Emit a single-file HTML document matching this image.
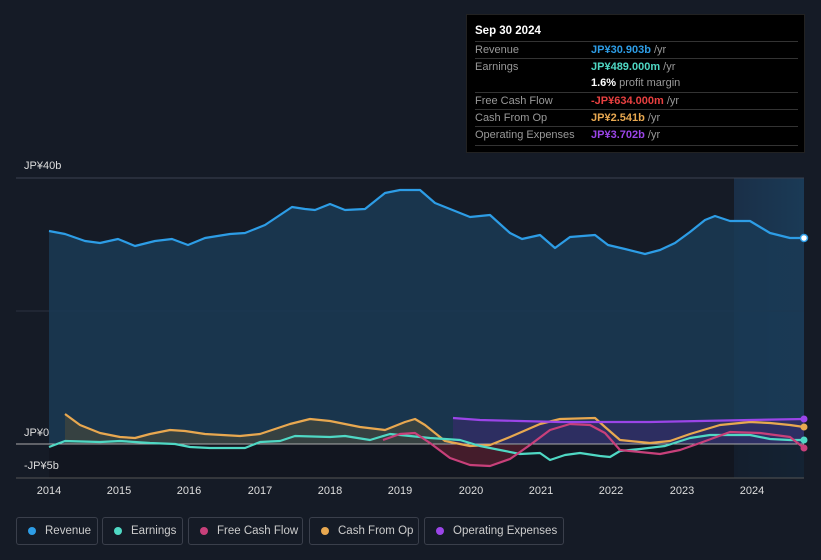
<!DOCTYPE html>
<html><head><meta charset="utf-8"><style>
body{margin:0;width:821px;height:560px;background:#151b26;font-family:"Liberation Sans",sans-serif;overflow:hidden;position:relative}
.tt{position:absolute;left:466px;top:14px;width:339px;height:139px;background:#000;border:1px solid #222;box-sizing:border-box;font-size:11px;color:#999}
.tt .h{color:#fff;font-size:11.5px;font-weight:bold;position:absolute;left:8px;top:10px}
.row{position:absolute;left:8px;right:6px;height:17px;border-top:1px solid #333;line-height:17px}
.row span.v{position:absolute;left:116px}
.row b{font-weight:bold}
.leg{position:absolute;top:517px;height:28px;border:1px solid #3a3f4b;border-radius:3px;box-sizing:border-box;color:#ccc;font-size:11.5px;line-height:26px;padding-left:28px}
.leg i{position:absolute;left:11px;top:9px;width:8px;height:8px;border-radius:50%}
.yl{position:absolute;color:#ddd;font-size:11px}
.xl{position:absolute;top:485px;color:#ddd;font-size:11px;width:40px;text-align:center}
</style></head><body>
<svg width="821" height="560" style="position:absolute;left:0;top:0">
<defs><linearGradient id="fc" x1="0" y1="0" x2="1" y2="0"><stop offset="0" stop-color="#1b3450"/><stop offset="1" stop-color="#1c4262"/></linearGradient></defs>
<rect x="734" y="178" width="70" height="300" fill="url(#fc)" opacity=".8"/>
<line x1="16" y1="178" x2="804" y2="178" stroke="#3a4150"/>
<line x1="16" y1="311" x2="804" y2="311" stroke="#2a3140"/>
<path d="M49,231 L65,234 85,241 100,243 118,239 135,246 155,241 172,239 188,245 205,238 230,234 245,233 265,225 280,215 292,207 305,209 315,210 330,204 345,210 365,209 385,193 400,190 420,190 435,203 455,211 470,217 490,215 510,233 522,239 540,235 555,248 570,237 595,235 608,245 625,249 645,254 660,250 675,243 690,232 705,220 715,216 730,221 750,221 770,233 790,238 804,238 L804,444 L49,444Z" fill="#1a3a55" opacity=".85"/>
<path d="M49,444 L804,444 804,478 49,478Z" fill="#10141c" opacity=".6"/>
<path d="M453,418 L480,420 520,421 560,422 600,422 650,422 700,421 750,420 804,419 L804,444 453,444Z" fill="#3a2a70" opacity=".6"/>
<path d="M65,414 L80,425 100,433 120,437 135,438 150,434 170,430 185,431 205,434 240,436 260,434 290,424 310,419 330,421 360,427 385,430 405,422 415,419 425,425 445,441 L445,444 65,444Z" fill="#4a4a3a" opacity=".6"/>
<path d="M420,444 L430,443 450,458 470,465 490,466 510,459 530,445Z" fill="#5a2030" opacity=".7"/>
<line x1="16" y1="444" x2="804" y2="444" stroke="#aaa" stroke-width="1"/>
<line x1="16" y1="478" x2="804" y2="478" stroke="#555"/>
<g fill="none" stroke-width="2.2" stroke-linejoin="round">
<path stroke="#2d9de6" d="M49,231 L65,234 85,241 100,243 118,239 135,246 155,241 172,239 188,245 205,238 230,234 245,233 265,225 280,215 292,207 305,209 315,210 330,204 345,210 365,209 385,193 400,190 420,190 435,203 455,211 470,217 490,215 510,233 522,239 540,235 555,248 570,237 595,235 608,245 625,249 645,254 660,250 675,243 690,232 705,220 715,216 730,221 750,221 770,233 790,238 804,238"/>
<path stroke="#e8a850" d="M65,414 L80,425 100,433 120,437 135,438 150,434 170,430 185,431 205,434 240,436 260,434 290,424 310,419 330,421 360,427 385,430 405,422 415,419 425,425 445,441 470,446 490,445 510,437 540,424 560,419 595,418 605,427 620,440 650,443 670,441 690,434 720,425 750,422 770,423 790,425 804,427"/>
<path stroke="#4fd8c4" d="M49,447 L65,441 100,442 120,441 150,443 175,444 190,447 210,448 245,448 260,442 280,441 295,436 330,437 345,436 370,440 390,434 410,436 430,438 460,440 480,446 500,450 520,454 540,453 550,460 565,455 580,453 600,456 610,457 620,451 640,449 665,446 690,438 710,435 750,435 770,439 790,440 804,440"/>
<path stroke="#c8407a" d="M383,440 L400,434 415,433 430,443 450,458 470,465 490,466 510,459 530,445 550,430 570,424 590,425 605,433 620,450 640,452 660,454 680,450 700,443 730,432 760,433 790,437 804,448"/>
<path stroke="#9b45e8" d="M453,418 L480,420 520,421 560,422 600,422 650,422 700,421 750,420 804,419"/>
</g>
<circle cx="804" cy="238" r="3.5" fill="#fff" stroke="#2d9de6" stroke-width="1.5"/>
<circle cx="804" cy="419" r="3.5" fill="#9b45e8"/>
<circle cx="804" cy="427" r="3.5" fill="#e8a850"/>
<circle cx="804" cy="440" r="3.5" fill="#4fd8c4"/>
<circle cx="804" cy="448" r="3.5" fill="#c8407a"/>
</svg>
<div class="yl" style="left:24px;top:160px">JP¥40b</div>
<div class="yl" style="left:24px;top:427px">JP¥0</div>
<div class="yl" style="left:24px;top:460px">-JP¥5b</div>
<div class="xl" style="left:29px">2014</div><div class="xl" style="left:99px">2015</div><div class="xl" style="left:169px">2016</div><div class="xl" style="left:240px">2017</div><div class="xl" style="left:310px">2018</div><div class="xl" style="left:380px">2019</div><div class="xl" style="left:451px">2020</div><div class="xl" style="left:521px">2021</div><div class="xl" style="left:591px">2022</div><div class="xl" style="left:662px">2023</div><div class="xl" style="left:732px">2024</div>
<div class="tt">
<div class="h">Sep 30 2024</div>
<div class="row" style="top:26px">Revenue<span class="v"><b style="color:#2d9de6">JP¥30.903b</b> /yr</span></div>
<div class="row" style="top:43px">Earnings<span class="v"><b style="color:#4fd8c4">JP¥489.000m</b> /yr</span></div>
<div class="row" style="top:60px;border-top:none"><span class="v"><b style="color:#fff">1.6%</b> profit margin</span></div>
<div class="row" style="top:77px">Free Cash Flow<span class="v"><b style="color:#e84040">-JP¥634.000m</b> /yr</span></div>
<div class="row" style="top:94px">Cash From Op<span class="v"><b style="color:#e8a850">JP¥2.541b</b> /yr</span></div>
<div class="row" style="top:111px">Operating Expenses<span class="v"><b style="color:#9b45e8">JP¥3.702b</b> /yr</span></div>
<div class="row" style="top:130px;height:0"></div>
</div>
<div class="leg" style="left:16px;width:82px"><i style="background:#2d9de6"></i>Revenue</div>
<div class="leg" style="left:102px;width:81px"><i style="background:#4fd8c4"></i>Earnings</div>
<div class="leg" style="left:188px;width:115px"><i style="background:#c8407a"></i>Free Cash Flow</div>
<div class="leg" style="left:309px;width:110px"><i style="background:#e8a850"></i>Cash From Op</div>
<div class="leg" style="left:424px;width:140px"><i style="background:#9b45e8"></i>Operating Expenses</div>
</body></html>
